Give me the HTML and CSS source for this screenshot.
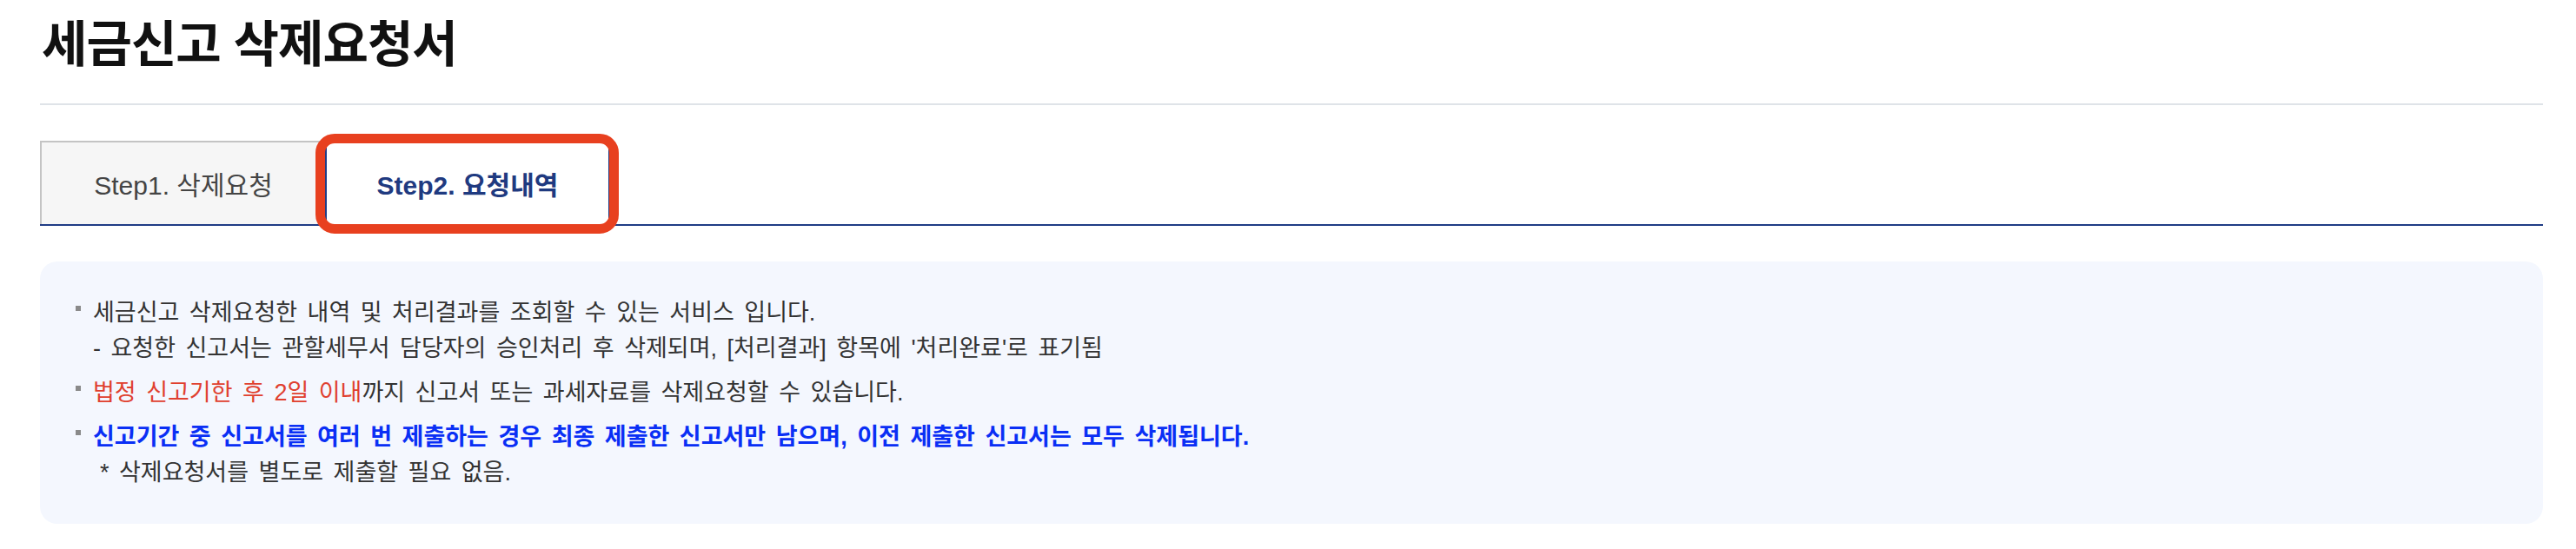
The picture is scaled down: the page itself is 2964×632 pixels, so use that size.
FILE: index.html
```html
<!DOCTYPE html>
<html lang="ko">
<head>
<meta charset="utf-8">
<title>세금신고 삭제요청서</title>
<link rel="stylesheet" href="styles.css">
</head>
<body>
<div class="page">
  <h1 class="title">세금신고 삭제요청서</h1>
  <div class="tabs">
    <div class="tab">Step1. 삭제요청</div>
    <div class="tab tab-active">Step2. 요청내역<span class="highlight"></span></div>
  </div>
  <div class="notice">
    <ul class="notice-list">
      <li>
        <div>세금신고 삭제요청한 내역 및 처리결과를 조회할 수 있는 서비스 입니다.</div>
        <div>- 요청한 신고서는 관할세무서 담당자의 승인처리 후 삭제되며, [처리결과] 항목에 '처리완료'로 표기됨</div>
      </li>
      <li><span class="red">법정 신고기한 후 2일 이내</span>까지 신고서 또는 과세자료를 삭제요청할 수 있습니다.</li>
      <li>
        <div class="blue">신고기간 중 신고서를 여러 번 제출하는 경우 최종 제출한 신고서만 남으며, 이전 제출한 신고서는 모두 삭제됩니다.</div>
        <div class="note">* 삭제요청서를 별도로 제출할 필요 없음.</div>
      </li>
    </ul>
  </div>
</div>
</body>
</html>
```

FILE: styles.css
```css
html, body {
  margin: 0;
  padding: 0;
  background: #ffffff;
}

body {
  font-family: "Liberation Sans", "Noto Sans CJK KR", sans-serif;
  color: #333333;
}

.page {
  padding: 0 38px 0 46px;
}

.title {
  margin: 0;
  padding: 20px 0 37px 2px;
  font-size: 57px;
  line-height: 62px;
  font-weight: 700;
  letter-spacing: -1px;
  color: #111111;
  border-bottom: 2px solid #dfe3e8;
}

.tabs {
  display: flex;
  margin-top: 41px;
  border-bottom: 2px solid #1f3c85;
}

.tab {
  box-sizing: border-box;
  width: 328px;
  height: 96px;
  display: flex;
  align-items: center;
  justify-content: center;
  font-size: 30px;
  color: #444444;
  background: #f6f6f6;
  border: 2px solid #c4c4c4;
  border-right: 0;
  border-bottom: 0;
}

.tab-active {
  position: relative;
  background: #ffffff;
  border: 2px solid #1f3c85;
  border-bottom: 0;
  color: #1f3a80;
  font-weight: 700;
}

.highlight {
  position: absolute;
  top: -10px;
  left: -13px;
  right: -12px;
  bottom: -11px;
  border: 11px solid #e8401f;
  border-radius: 22px;
}

.notice {
  margin-top: 41px;
  background: #f4f7fe;
  border-radius: 20px;
  padding: 39px 41px 38px 41px;
}

.notice-list {
  list-style: none;
  margin: 0;
  padding: 0;
}

.notice-list li {
  position: relative;
  padding-left: 20px;
  font-size: 27px;
  line-height: 41px;
  word-spacing: 4px;
  color: #333333;
}

.notice-list li + li {
  margin-top: 10px;
}

.notice-list li::before {
  content: "";
  position: absolute;
  left: 0;
  top: 12px;
  width: 6px;
  height: 6px;
  background: #8a8a8a;
}

.red {
  color: #e0402f;
}

.blue {
  color: #0a2ff5;
  font-weight: 700;
}

.note {
  padding-left: 8px;
}
```
